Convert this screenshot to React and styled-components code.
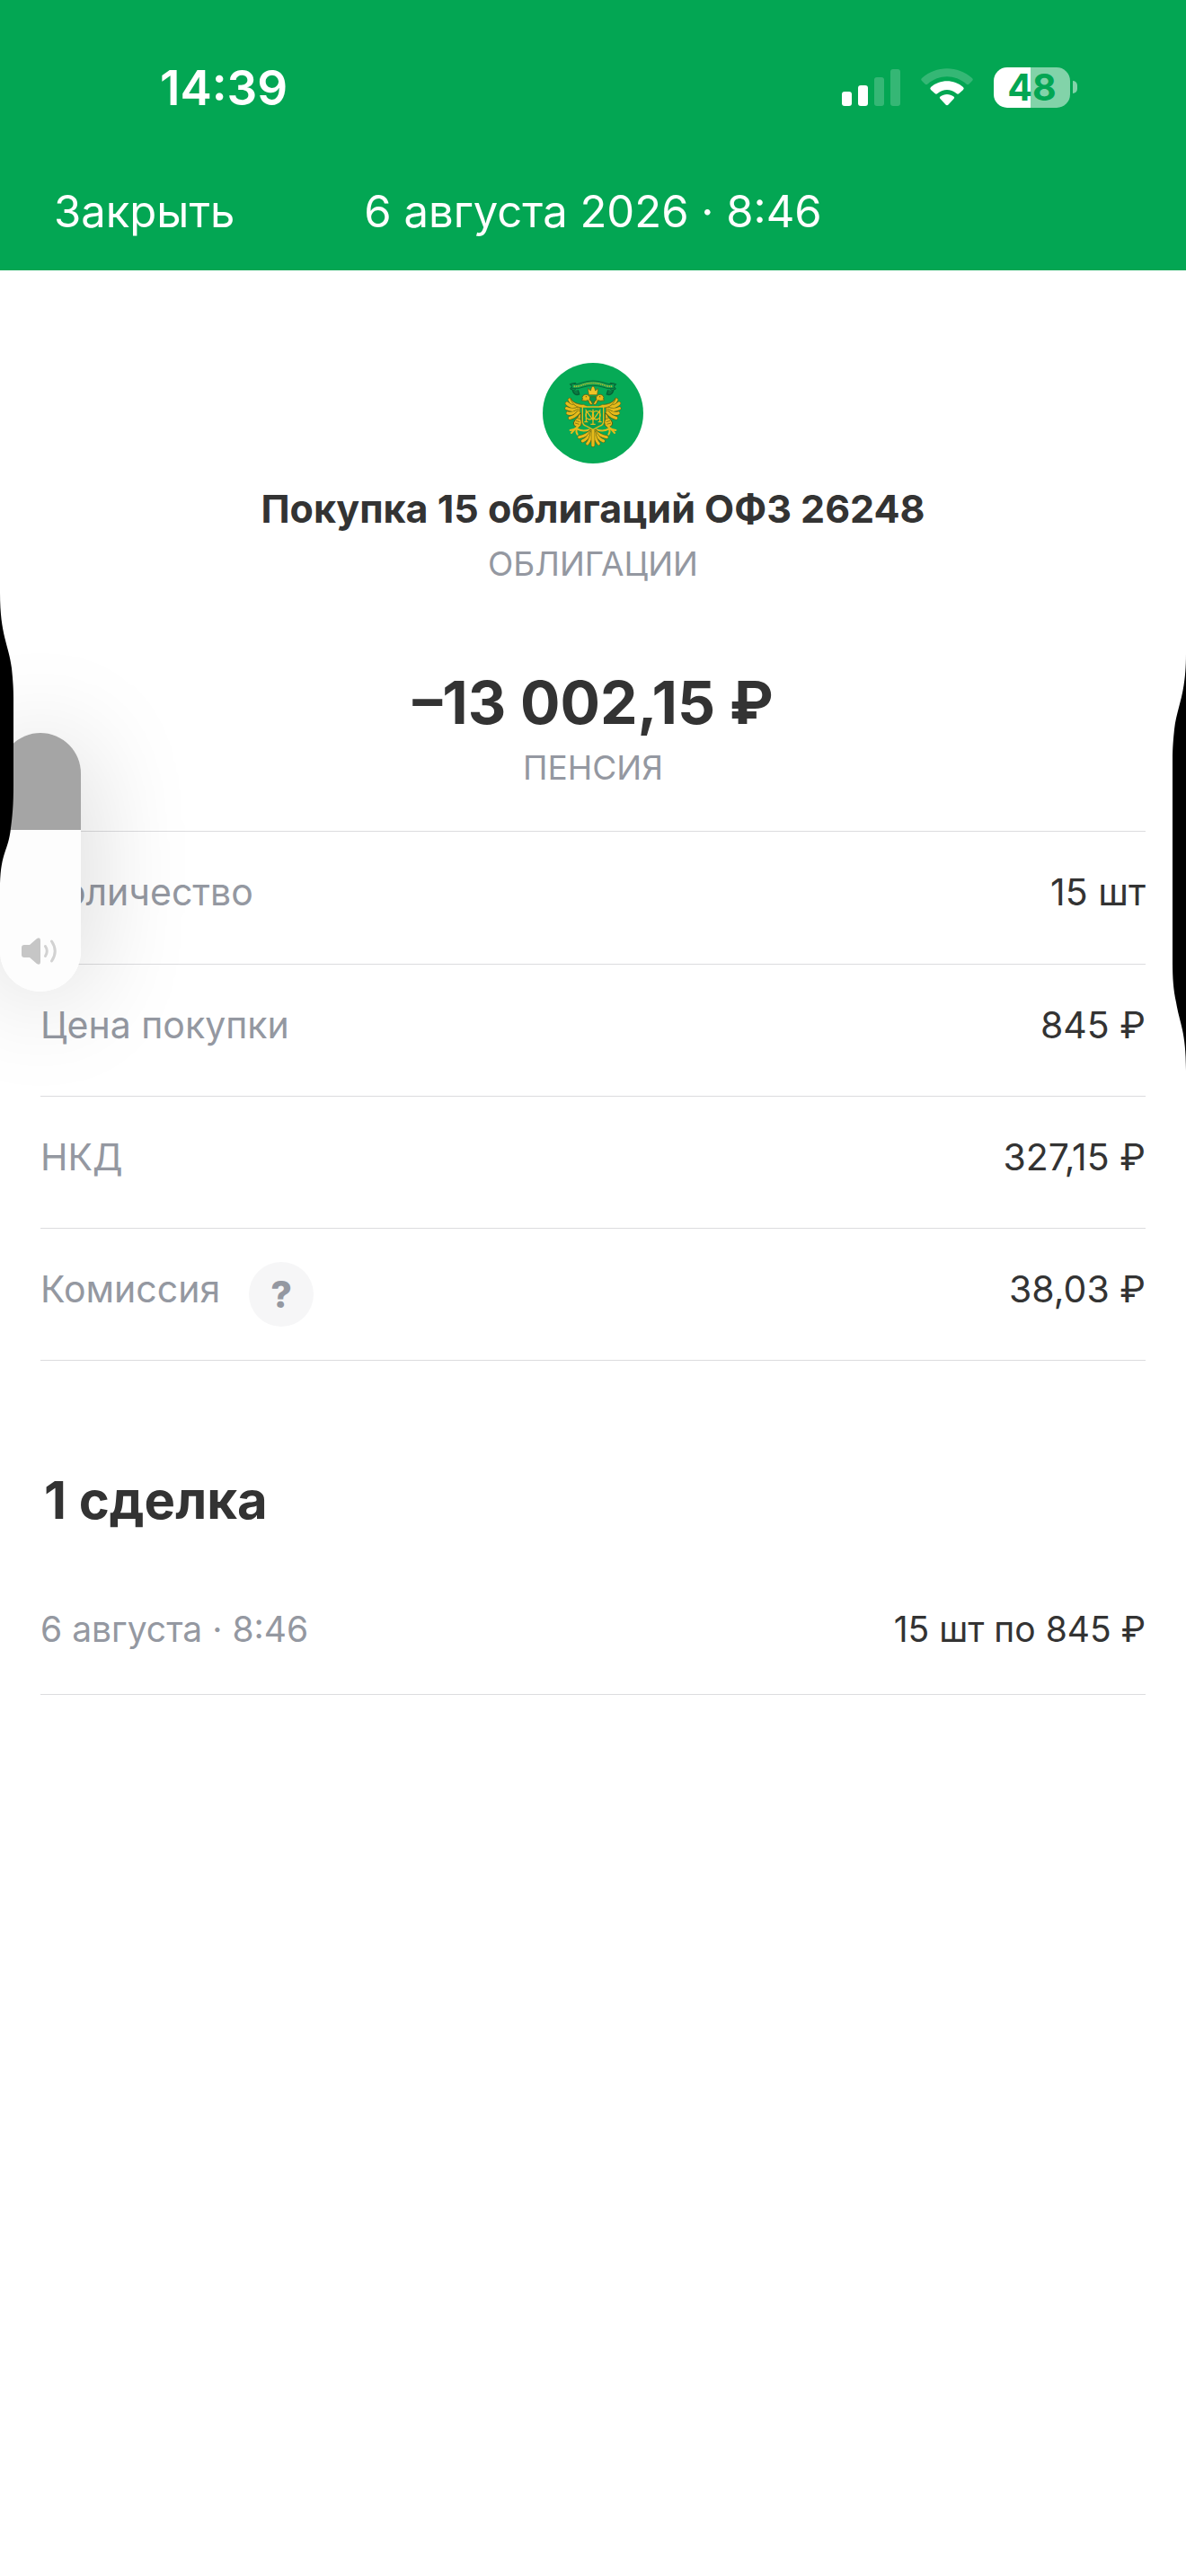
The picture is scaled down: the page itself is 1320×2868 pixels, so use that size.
import React, { useState } from 'react';
import styled, { createGlobalStyle } from 'styled-components';

const GlobalStyle = createGlobalStyle`
    *, *::before, *::after {
        box-sizing: border-box;
    }
    body {
        margin: 0;
        background: #fff;
        color: #333;
        font-family: Inter, "Liberation Sans", sans-serif;
    }
`;

const Screen = styled.div`
    position: relative;
    min-height: 100vh;
    overflow: hidden;
`;

const Header = styled.header`
    background: #03a653;
    color: #fff;
    padding-bottom: 25px;
`;

const StatusBar = styled.div`
    display: flex;
    align-items: center;
    justify-content: space-between;
    height: 196px;
    padding: 0 121px 0 178px;
`;

const Clock = styled.time`
    font-size: 53px;
    font-weight: 600;
    line-height: 60px;
`;

const Indicators = styled.div`
    display: flex;
    align-items: center;
    gap: 23px;
    padding-bottom: 2px;
`;

const Battery = styled.div`
    display: flex;
    align-items: center;
    gap: 3px;
`;

const BatteryBody = styled.div`
    width: 85px;
    border-radius: 15px;
    background: linear-gradient(to right, #fff 48%, #82d3a9 48%);
    color: #03a653;
    font-size: 41px;
    font-weight: 700;
    line-height: 45px;
    text-align: center;
`;

const BatteryTip = styled.span`
    width: 5px;
    height: 14px;
    border-radius: 0 5px 5px 0;
    background: #82d3a9;
`;

const NavBar = styled.nav`
    display: grid;
    grid-template-columns: 1fr auto 1fr;
    align-items: center;
    height: 80px;
    padding: 0 60px;
    font-size: 49px;
    line-height: 60px;
`;

const CloseButton = styled.button`
    justify-self: start;
    padding: 0;
    border: 0;
    background: none;
    color: inherit;
    font: inherit;
    cursor: pointer;
`;

const NavTitle = styled.h1`
    margin: 0;
    font-size: inherit;
    font-weight: 400;
`;

const Content = styled.main`
    padding: 103px 45px 0;
`;

const Summary = styled.section`
    display: flex;
    flex-direction: column;
    align-items: center;
    margin-bottom: 48px;
    text-align: center;
`;

const OperationTitle = styled.h2`
    margin: 22px 0 12px;
    font-size: 43px;
    font-weight: 700;
    line-height: 56px;
`;

const Caption = styled.p`
    margin: 0;
    color: #9498a1;
    font-size: 37px;
    line-height: 44px;
`;

const Amount = styled.p`
    margin: 92px 0 11px;
    font-size: 66px;
    font-weight: 700;
    line-height: 80px;
`;

const Details = styled.dl`
    margin: 0;
    border-top: 1px solid #dcdcde;
    border-bottom: 1px solid #dcdcde;
`;

const Row = styled.div`
    display: flex;
    align-items: flex-start;
    justify-content: space-between;
    min-height: 147px;
    padding: 37px 0 36px;
    font-size: 41px;
    line-height: 60px;

    & + & {
        border-top: 1px solid #dcdcde;
    }
`;

const Label = styled.dt`
    display: flex;
    align-items: flex-start;
    gap: 32px;
    color: #9498a1;
`;

const Value = styled.dd`
    margin: 0;
`;

const HelpButton = styled.button`
    width: 72px;
    height: 72px;
    padding: 0;
    border: 0;
    border-radius: 50%;
    background: #f6f6f7;
    color: #9498a1;
    font: inherit;
    font-weight: 800;
    cursor: pointer;
`;

const DealsTitle = styled.h2`
    margin: 119px 4px 78px;
    font-size: 58px;
    font-weight: 700;
    line-height: 72px;
`;

const DealRow = styled.div`
    display: flex;
    justify-content: space-between;
    padding-bottom: 42px;
    border-bottom: 1px solid #dcdcde;
    font-size: 39px;
    line-height: 60px;
`;

const DealDate = styled.time`
    color: #9498a1;
`;

const Volume = styled.label`
    position: absolute;
    top: 816px;
    left: 0;
    width: 90px;
    height: 288px;
    border-radius: 45px;
    box-shadow: 0 8px 120px rgba(0, 0, 0, 0.18);

    svg {
        position: absolute;
        left: 24px;
        bottom: 30px;
        pointer-events: none;
    }
`;

const VolumeRange = styled.input`
    display: block;
    width: 100%;
    height: 100%;
    margin: 0;
    border-radius: 45px;
    appearance: none;
    writing-mode: vertical-lr;
    direction: rtl;
    cursor: pointer;

    &::-webkit-slider-thumb {
        appearance: none;
        width: 90px;
        height: 1px;
    }
`;

const EdgeBump = styled.svg`
    position: absolute;
    top: ${props => props.$top}px;
    ${props => props.$side}: 0;
    pointer-events: none;
`;

const details = [
    { label: 'Количество', value: '15 шт' },
    { label: 'Цена покупки', value: '845 ₽' },
    { label: 'НКД', value: '327,15 ₽' },
    { label: 'Комиссия', value: '38,03 ₽', help: true },
];

const GOLD = '#e6bb1b';
const DARK = '#5a5f14';

const wingFeathers = [
    'M164 184 Q140 182 132 164',
    'M162 188 Q136 190 123 176',
    'M162 194 Q138 202 122 193',
    'M162 200 Q142 214 126 209',
    'M162 206 Q148 222 133 225',
];

const tailFeathers = [
    'M204 268 Q190 284 164 289',
    'M205 270 Q194 294 175 302',
    'M207 272 Q202 298 191 311',
];

function Signal() {
    return (
        <svg width="65" height="42" viewBox="0 0 65 42" fill="#fff" aria-hidden="true">
            <rect x="0" y="26" width="11" height="16" rx="3" />
            <rect x="18" y="19" width="11" height="23" rx="3" />
            <rect x="36" y="10" width="11" height="32" rx="3" opacity="0.2" />
            <rect x="54" y="1" width="11" height="41" rx="3" opacity="0.2" />
        </svg>
    );
}

function Wifi() {
    return (
        <svg width="58" height="42" viewBox="0 0 58 42" fill="#fff" aria-hidden="true">
            <path opacity="0.2" d="M1 14Q-.5 12.500 1 11C17-3.500 41-3.500 57 11Q58.500 12.500 57 14L53.500 17.500Q52 19 50.500 17.500C38 6.500 20 6.500 7.500 17.500Q6 19 4.500 17.500Z" />
            <path d="M11 24Q9.500 22.500 11 21C21 12 37 12 47 21Q48.500 22.500 47 24L42.500 28Q41 29.500 39.500 28C33 22.500 25 22.500 18.500 28Q17 29.500 15.500 28Z" />
            <path d="M21.500 34Q20 32.500 21.500 31.500C26 28 32 28 36.500 31.500Q38 32.500 36.500 34L30.500 40.500Q29 42 27.500 40.500Z" />
        </svg>
    );
}

function Feather({ d, width }) {
    return (
        <g fill="none" strokeLinecap="round">
            <path d={d} stroke={DARK} strokeWidth={width + 3} />
            <path d={d} stroke={GOLD} strokeWidth={width} />
        </g>
    );
}

// left half of the eagle, drawn twice around x = 210
function EagleHalf() {
    return (
        <g>
            <path d="M133 112L152 108L158 122L146 134L134 128L140 120Z" fill="#07904a" stroke="#075f35" strokeWidth="3" />
            <path d="M142 134Q148 152 164 146L160 132" fill="#0a7a42" stroke="#075f35" strokeWidth="4" />
            {wingFeathers.map(d => <Feather key={d} d={d} width={10} />)}
            <path d="M134 160Q150 182 178 180L192 186Q186 194 166 190Q144 186 134 160Z" fill={GOLD} stroke={DARK} strokeWidth="2" />
            <path d="M204 182Q196 176 194 166Q186 170 172 166Q178 162 174 156Q178 145 190 147Q201 150 202 164L208 178Z" fill={GOLD} stroke={DARK} strokeWidth="2.500" />
            <circle cx="187" cy="154" r="2" fill={DARK} />
            <path d="M170 208Q166 224 172 240Q172 254 162 256Q146 256 145 242Q148 230 158 224Q160 214 170 208Z" fill={GOLD} stroke={DARK} strokeWidth="3" />
            <path d="M152 234L166 238M150 242L164 246M158 226L168 229" stroke={DARK} strokeWidth="2" />
            <path d="M160 254Q150 264 134 266M150 262L138 275M156 258Q152 272 158 280" fill="none" stroke={GOLD} strokeWidth="6" strokeLinecap="round" />
            <path d="M158 262Q176 272 198 264" fill="none" stroke={GOLD} strokeWidth="6" strokeLinecap="round" />
            {tailFeathers.map(d => <Feather key={d} d={d} width={9} />)}
        </g>
    );
}

function BondLogo() {
    return (
        <svg width="112" height="112" viewBox="42 41 336 336" role="img" aria-label="ОФЗ">
            <circle cx="210" cy="209" r="168" fill="#06aa56" />
            <EagleHalf />
            <g transform="translate(420 0) scale(-1 1)">
                <EagleHalf />
            </g>
            <Feather d="M210 266V316" width={10} />
            <path d="M138 110Q155 116 174 107Q210 95 246 107Q265 116 282 110L280 126Q260 130 243 122Q210 112 177 122Q160 130 140 126Z" fill="#07a04f" stroke="#076b3a" strokeWidth="3" />
            <path d="M146 119Q160 121 176 114Q210 103 244 114Q260 121 274 119" fill="none" stroke="#a6b83a" strokeWidth="6" strokeDasharray="4 2" />
            <path d="M193 126L202 134L205 124L210 118L215 124L218 134L227 126L224 148H196Z" fill="#f0c326" stroke={DARK} strokeWidth="2" />
            <path d="M202 154H218L222 164L210 174L198 164Z" fill="#08944c" stroke={DARK} strokeWidth="2" />
            <path d="M175 188H245V235Q245 249 232 252L210 264L188 252Q175 249 175 235Z" fill="#079c4f" stroke={GOLD} strokeWidth="4" />
            <g fill="none" stroke={GOLD} strokeWidth="4">
                <ellipse cx="199" cy="216" rx="13" ry="14" />
                <ellipse cx="221" cy="216" rx="13" ry="14" />
                <path d="M187 238V200L210 232L233 200V238M210 196V246M181 238H193M227 238H239M202 246H218" />
            </g>
        </svg>
    );
}

function SpeakerIcon() {
    return (
        <svg width="40" height="30" viewBox="0 0 40 30" aria-hidden="true">
            <path d="M3 8H9L17 1Q21-1 21 3V27Q21 31 17 29L9 22H3Q0 22 0 19V11Q0 8 3 8Z" fill="#c6c6c6" />
            <path d="M26.500 9.500Q30 15 26.500 20.500M33.500 4Q41 15 33.500 26" fill="none" stroke="#d2d2d2" strokeWidth="3" strokeLinecap="round" />
        </svg>
    );
}

function VolumeControl() {
    const [level, setLevel] = useState(62.5);
    const rest = 100 - level;

    return (
        <Volume>
            <VolumeRange
                type="range"
                min="0"
                max="100"
                step="0.5"
                value={level}
                aria-label="Громкость"
                onChange={e => setLevel(Number(e.target.value))}
                style={{ background: `linear-gradient(#a5a5a5 ${rest}%, #fdfdfd ${rest}%)` }}
            />
            <SpeakerIcon />
        </Volume>
    );
}

function App() {
    return (
        <Screen>
            <GlobalStyle />
            <Header>
                <StatusBar>
                    <Clock>14:39</Clock>
                    <Indicators>
                        <Signal />
                        <Wifi />
                        <Battery>
                            <BatteryBody>48</BatteryBody>
                            <BatteryTip />
                        </Battery>
                    </Indicators>
                </StatusBar>
                <NavBar>
                    <CloseButton type="button">Закрыть</CloseButton>
                    <NavTitle>6 августа 2026 · 8:46</NavTitle>
                </NavBar>
            </Header>

            <Content>
                <Summary>
                    <BondLogo />
                    <OperationTitle>Покупка 15 облигаций ОФЗ 26248</OperationTitle>
                    <Caption>ОБЛИГАЦИИ</Caption>
                    <Amount>–13 002,15 ₽</Amount>
                    <Caption>ПЕНСИЯ</Caption>
                </Summary>

                <Details>
                    {details.map(item => (
                        <Row key={item.label}>
                            <Label>
                                {item.label}
                                {item.help && <HelpButton type="button" aria-label="Подробнее о комиссии">?</HelpButton>}
                            </Label>
                            <Value>{item.value}</Value>
                        </Row>
                    ))}
                </Details>

                <DealsTitle>1 сделка</DealsTitle>
                <DealRow>
                    <DealDate>6 августа · 8:46</DealDate>
                    <span>15 шт по 845 ₽</span>
                </DealRow>
            </Content>

            <VolumeControl />
            <EdgeBump $side="left" $top={660} width="15" height="332" viewBox="0 0 15 332" aria-hidden="true">
                <path d="M0 0C0 48 10 58 13 84C14 94 15 104 15 118V214C15 236 14 248 11.500 266C8 290 0 290 0 332Z" />
            </EdgeBump>
            <EdgeBump $side="right" $top={728} width="15" height="464" viewBox="0 0 15 464" aria-hidden="true">
                <path d="M15 0C15 46 5 58 2 84C1 94 0 104 0 118V342C0 362 1 374 4 388C8 412 15 420 15 464Z" />
            </EdgeBump>
        </Screen>
    );
}

export default App;
